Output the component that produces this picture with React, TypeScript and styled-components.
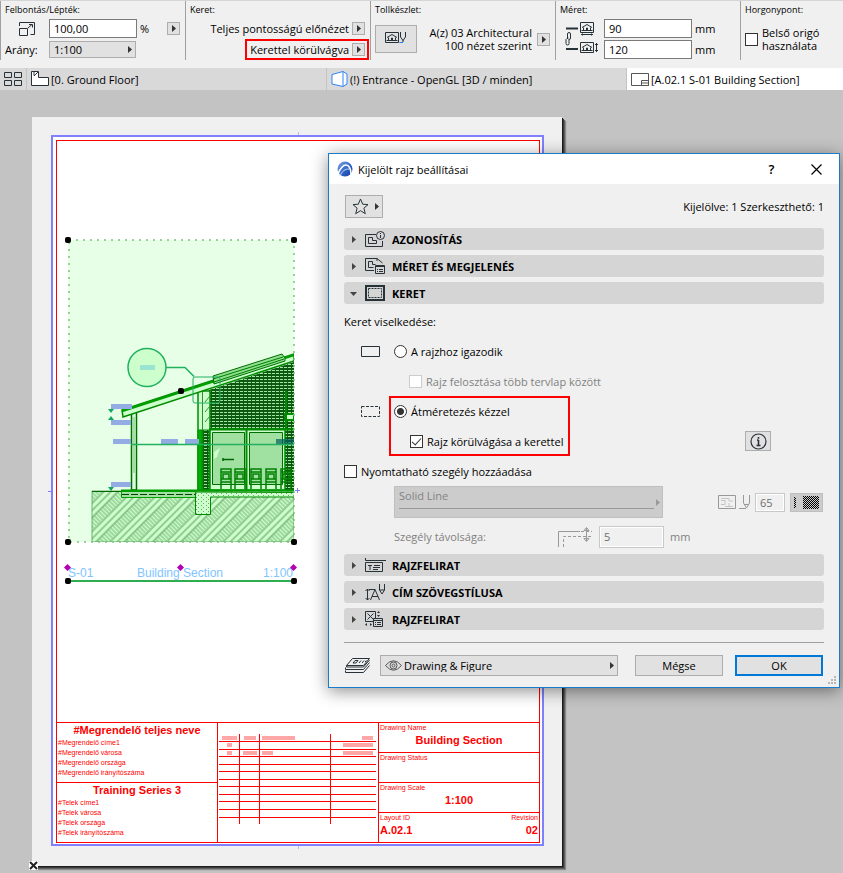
import React from "react";
import styled, { createGlobalStyle, css } from "styled-components";

const ink = "#263238";
const face = "#e1e1e1";
const edge = "#adadad";
const red = "#ff0000";

const GlobalStyle = createGlobalStyle`
  * { box-sizing: border-box; }
  body { margin: 0; }
  body, button, input, select {
    font-family: "Open Sans", "Noto Sans", sans-serif;
    font-size: 11px;
    line-height: 13px;
    color: #000;
  }
  button, input, select { margin: 0; padding: 0; border-radius: 0; }
  svg { display: block; flex: none; }
`;

/* ---------- shared parts ---------- */

const Page = styled.div`
  position: relative;
  display: flex;
  flex-direction: column;
  min-height: 100vh;
  background: #c3c3c3;
  white-space: nowrap;
`;

const Push = styled.span`
  margin-left: auto;
`;

const ArrowButton = styled.button`
  display: flex;
  align-items: center;
  justify-content: center;
  flex: none;
  width: 13px;
  height: 13px;
  border: 1px solid ${edge};
  background: ${face};
`;

const TextField = styled.input<{ $w: number; $h?: number }>`
  width: ${(p) => p.$w}px;
  height: ${(p) => p.$h ?? 19}px;
  padding: 0 4px;
  border: 1px solid #7a7a7a;
  background: #fff;
  &:disabled {
    border: 1px solid #c8c8c8;
    outline: 1px solid #fff;
    outline-offset: -2px;
    background: #f0f0f0;
    color: #6d6d6d;
  }
`;

const SelectBox = styled.span<{ $w?: number; $h: number; $disabled?: boolean }>`
  position: relative;
  display: flex;
  ${(p) => (p.$w ? `width: ${p.$w}px;` : "flex: 1;")}
  height: ${(p) => p.$h}px;
  border: 1px solid ${(p) => (p.$disabled ? "#bfbfbf" : edge)};
  background: ${(p) => (p.$disabled ? "#cccccc" : face)};
`;

const Select = styled.select<{ $left?: number; $bottom?: number }>`
  appearance: none;
  flex: 1;
  border: 0;
  background: transparent;
  padding: 0 14px ${(p) => p.$bottom ?? 0}px ${(p) => p.$left ?? 4}px;
  &:disabled { color: #838383; opacity: 1; }
`;

const Overlay = styled.span<{ $side: "left" | "right"; $inset: number }>`
  position: absolute;
  top: 0;
  bottom: 0;
  ${(p) => p.$side}: ${(p) => p.$inset}px;
  display: flex;
  align-items: center;
  pointer-events: none;
`;

const highlight = css`
  outline: 2px solid ${red};
  outline-offset: -2px;
`;

const CheckLabel = styled.label<{ $muted?: boolean; $left?: number }>`
  display: flex;
  align-items: center;
  gap: 4px;
  height: 30px;
  padding-left: ${(p) => p.$left ?? 0}px;
  color: ${(p) => (p.$muted ? "#808080" : "#000")};
`;

const CheckBox = styled.input.attrs({ type: "checkbox" })`
  appearance: none;
  display: flex;
  justify-content: center;
  flex: none;
  width: 13px;
  height: 13px;
  border: 1px solid #333;
  background: #fff;
  &:disabled { border-color: #ccc; }
  &:checked::before {
    content: "";
    width: 4px;
    height: 8px;
    border: solid #333;
    border-width: 0 1px 1px 0;
    transform: rotate(42deg);
  }
`;

const Radio = styled.input.attrs({ type: "radio" })`
  appearance: none;
  flex: none;
  width: 13px;
  height: 13px;
  border: 1px solid #333;
  border-radius: 50%;
  background: #fff;
  &:checked { background: radial-gradient(circle, #333 0 3px, #fff 4px); }
`;

const Triangle = ({ down = false, color = "#333" }: { down?: boolean; color?: string }) => (
  <svg width="7" height="7" viewBox="0 0 7 7" fill={color}>
    <path d={down ? "M0 2h7L3.5 6z" : "M2 0v7l4-3.5z"} />
  </svg>
);

/* ---------- icons ---------- */

const Line = styled.svg.attrs({ fill: "none", stroke: ink })``;

const ScaleIcon = () => (
  <Line width="17" height="14" viewBox="0 0 17 14">
    <path d="M.5 4V.5h15v12h-4M.5 6.500h8v7h-8zM9 6l4-3.500M10 2.500h3.500V5.500" />
  </Line>
);

const House = ({ pen = false, arrow }: { pen?: boolean; arrow?: "h" | "v" }) => (
  <Line width={pen ? 22 : 19} height="14" viewBox={`0 0 ${pen ? 22 : 19} 14`}>
    <path d="M.5 .5h13v10H.5zM1.500 8.500h11M3.500 8V5.500M10.500 8V5.500M2 5.500L7 2.500l5 3M6.500 8V6h1v2" />
    {arrow === "h" && <path d="M1 12.500h12M2.500 11.500v2M11.500 11.500v2" />}
    {arrow === "v" && <path d="M16.500 1v9M15 2.500h3M15 8.500h3" />}
    {pen && <path d="M15.500 0v5l2.500 3.500L20.500 5V0M18 8v2" />}
    {pen && <path d="M14.500 10.500H18" stroke="#1e7bff" />}
  </Line>
);

const ChainIcon = () => (
  <Line width="14" height="28" viewBox="0 0 14 28">
    <path d="M2 3.500h12M2 24h12" strokeWidth="2" />
    <path d="M3.500 14V9q0-1.500 1.500-1.500T6.500 9v4q0 1.500-1.500 1.500M4.500 13q-1.500 0-2.500 1.500v4q0 1.500 1.500 1.500T5 18.500V14" />
  </Line>
);

const GridIcon = () => (
  <Line width="19" height="15" viewBox="0 0 19 15">
    <path d="M.5 .5h7v5h-7zM10.500 .5h7v5h-7zM.5 8.500h7v5h-7zM10.500 8.500h7v5h-7z" />
  </Line>
);

const PlanIcon = () => (
  <svg width="18" height="16" viewBox="0 0 18 16" fill="#fff" stroke={ink}>
    <path d="M.5 .5h7v6h10v8H.5z" />
    <path d="M3 1v3.500M3 5l4-4" fill="none" />
  </svg>
);

const CubeIcon = () => (
  <svg width="17" height="17" viewBox="0 0 17 17" fill="#fff" stroke="#2f83f5">
    <path d="M1 3.500L12 .5v15L1 13zM12 .5l4 2.500v10l-4 2.500" />
  </svg>
);

const LayoutIcon = () => (
  <svg width="18" height="13" viewBox="0 0 18 13" fill="#fff" stroke="#555">
    <path d="M.5 .5h17v12H.5zM10.500 7.500h7v5h-7zM10.500 10h7" />
  </svg>
);

const Logo = () => (
  <svg width="16" height="16" viewBox="0 0 16 16">
    <defs>
      <linearGradient id="logo" x1="0" y1="0" x2="1" y2="1">
        <stop offset="0" stopColor="#7fa6e8" />
        <stop offset=".6" stopColor="#2b5ec4" />
        <stop offset="1" stopColor="#163c93" />
      </linearGradient>
    </defs>
    <circle cx="8" cy="8" r="7.500" fill="url(#logo)" />
    <path d="M1 13C3 8 6 4 9 4s5 4 5 9" fill="none" stroke="#fff" strokeWidth="1.600" />
    <path d="M3 15c2-5 5-7 9-7" fill="none" stroke="#c5d8f7" />
  </svg>
);

const StarIcon = () => (
  <Line width="17" height="17" viewBox="0 0 17 17">
    <path d="M8.500 1l2.200 5.200 5.300.4-4.100 3.600 1.400 5.500-4.800-3-4.800 3 1.400-5.500L1 6.600l5.300-.4z" />
  </Line>
);

const IdentityIcon = () => (
  <Line width="20" height="16" viewBox="0 0 20 16">
    <path d="M11 3.500H.5v12h17V10M3.500 6.500v6h8v-3h-4v-3z" />
    <circle cx="15.500" cy="4.500" r="4" />
    <path d="M15.500 4v3M15.500 2v1" />
  </Line>
);

const SizeIcon = () => (
  <Line width="20" height="16" viewBox="0 0 20 16">
    <path d="M9 12.500H.5V.5H12L17.500 5M12 .5V3M3.500 3.500v6h5M3.500 3.500h4v3h3" />
    <path d="M10.500 7.500h9v8h-9z" />
    <path d="M11 8.500h8M12 11.500h1M14 11.500h4M12 13.500h1M14 13.500h4" />
  </Line>
);

const FrameIcon = () => (
  <Line width="20" height="16" viewBox="0 0 20 16">
    <path d="M1 1h18v14H1z" strokeWidth="2" />
    <path d="M3.500 3.500h13v9h-13z" strokeDasharray="2 1" />
  </Line>
);

const TitleIcon = () => (
  <Line width="21" height="14" viewBox="0 0 21 14">
    <path d="M.5 0v2.500H21M.5 4.500h17v9H.5zM3 7.500h4M5 7.500V12M9 7.500h6M8 9.500h7M8 11.500h5" />
  </Line>
);

const TextStyleIcon = () => (
  <Line width="21" height="17" viewBox="0 0 21 17">
    <path d="M2.500 5v11M.5 7l2-2 2 2M.5 14l2 2 2-2M5.500 16L10 5.500 14.500 16M7 12.500h6M4 5.500h6" />
    <path d="M14.500 0v6l2.500 4 2.500-4V0M14.500 6h5" />
  </Line>
);

const TitleGridIcon = () => (
  <Line width="19" height="17" viewBox="0 0 19 17">
    <path d="M8 10.500H.5V.5h10V7M2.500 2.500l6 6M8.500 2.500l-6 6M8.500 7.500h9v8h-9zM9 9.500h8M10 11.500h1M12 11.500h4M10 13.500h1M12 13.500h4" />
    <path d="M13.500 0L12 2h3zM13.500 6L12 4h3zM0 13.500l2-1.500v3zM7 13.500l-2-1.500v3z" fill={ink} stroke="none" />
  </Line>
);

const BoxIcon = ({ dashed = false }: { dashed?: boolean }) => (
  <Line width="19" height="11" viewBox="0 0 19 11">
    <path d="M.5 .5h18v10H.5z" strokeDasharray={dashed ? "3 1.500" : undefined} />
  </Line>
);

const InfoIcon = () => (
  <Line width="17" height="17" viewBox="0 0 17 17">
    <circle cx="8.500" cy="8.500" r="7.500" strokeWidth="1.200" />
    <path d="M8.500 7v5.500M8.500 4v1.800M7 7h1.500M6.500 12.500h4" strokeWidth="1.600" />
  </Line>
);

const PenIcon = () => (
  <svg width="32" height="15" viewBox="0 0 32 15" fill="none" stroke="#999">
    <path d="M.5 .5h17v13H.5z" />
    <path d="M3 5.500h4v4H3M3 3.500h8V6h4M11 8v3.500h4M7 11.500h4" stroke="#c4c4c4" />
    <path d="M25.500 0v8l3 5 3-5V0M26 9.500h5M21 13.500h7" />
  </svg>
);

const OffsetIcon = () => (
  <svg width="35" height="20" viewBox="0 0 35 20" fill="none" stroke="#999">
    <path d="M.5 20V4.500H22" />
    <path d="M5.500 20V9.500H34" strokeDasharray="3 2" />
    <path d="M23 4.500H34" strokeDasharray="3 2" />
    <path d="M28.500 1v13M26 3.500l2.500-3 2.500 3zM26 11.500l2.500 3 2.500-3z" />
  </svg>
);

const PatternIcon = () => (
  <svg width="27" height="13" viewBox="0 0 27 13">
    <defs>
      <pattern id="check" width="2" height="2" patternUnits="userSpaceOnUse">
        <path d="M0 0h1v1H0zM1 1h1v1H1z" />
      </pattern>
    </defs>
    <path d="M1 1h2v11H1zM10 0h16v13H10z" fill="url(#check)" />
  </svg>
);

const LayersIcon = () => (
  <Line width="26" height="16" viewBox="0 0 26 16">
    <path d="M7.500 .5h17l-6 7H1.500zM1.500 7.500V9h17l6-7M.5 9.500v2h18l6-7M.5 12.500v2h18l6-7M8 5l2-2.500h3L11 5zM14 5l2-2.500M17 5l2-2.500M20 4l1.500-1.500" />
  </Line>
);

const EyeIcon = () => (
  <svg width="17" height="11" viewBox="0 0 17 11" fill="none" stroke="#555">
    <path d="M.5 5.500Q8.500-4 16.500 5.500 8.500 15 .5 5.500z" />
    <circle cx="8.500" cy="5.500" r="3.500" />
    <circle cx="8.500" cy="5.500" r="1.500" />
  </svg>
);

/* ---------- toolbar ---------- */

const Toolbar = styled.header`
  display: grid;
  grid-template-columns: repeat(4, 185fr) 103fr;
  padding-bottom: 8px;
  border-top: 1px solid #d5d5d5;
  background: #f0f0f0;
`;

const Group = styled.section`
  display: flex;
  flex-direction: column;
  height: 59px;
  padding: 2px 5px 0 4px;
  border-left: 1px solid #a0a0a0;
`;

const GroupTitle = styled.span`
  height: 15px;
  font-size: 9px;
  line-height: 13px;
`;

const ToolRow = styled.div<{ $end?: boolean }>`
  display: flex;
  align-items: center;
  justify-content: ${(p) => (p.$end ? "flex-end" : "flex-start")};
  gap: 3px;
  height: 21px;
`;

const Lead = styled.label`
  display: flex;
  justify-content: flex-start;
  width: 41px;
`;

const LeadIcon = styled(Lead)`
  padding-left: 14px;
`;

const Highlighted = styled.span`
  display: flex;
  align-items: center;
  gap: 3px;
  height: 21px;
  margin-right: -4px;
  padding: 0 4px 0 5px;
  ${highlight}
`;

const ToolBody = styled.div`
  display: flex;
  align-items: center;
  gap: 5px;
  height: 42px;
`;

const IconButton = styled.button<{ $w: number; $h: number }>`
  display: flex;
  align-items: center;
  justify-content: center;
  width: ${(p) => p.$w}px;
  height: ${(p) => p.$h}px;
  border: 1px solid ${edge};
  background: ${face};
`;

const FavoriteButton = styled(IconButton)`
  justify-content: flex-start;
  gap: 4px;
  padding-left: 6px;
`;

const TwoLines = styled.span<{ $end?: boolean }>`
  display: flex;
  flex-direction: column;
  ${(p) => p.$end && "margin-left: auto; text-align: right;"}
`;

const SizeIcons = styled.div`
  display: flex;
  align-items: center;
  gap: 2px;
  padding-left: 4px;
`;

const Stack = styled.div<{ $gap?: number }>`
  display: flex;
  flex-direction: column;
  gap: ${(p) => p.$gap ?? 0}px;
`;

const AnchorLabel = styled.label`
  display: flex;
  align-items: center;
  gap: 4px;
  height: 42px;
`;

const TopTools = () => (
  <Toolbar>
    <Group>
      <GroupTitle>Felbontás/Lépték:</GroupTitle>
      <ToolRow>
        <LeadIcon htmlFor="resolution"><ScaleIcon /></LeadIcon>
        <TextField id="resolution" aria-label="Felbontás" $w={88} defaultValue="100,00" />
        <span>%</span>
        <Push><ArrowButton aria-label="Felbontás lista"><Triangle /></ArrowButton></Push>
      </ToolRow>
      <ToolRow>
        <Lead htmlFor="ratio">Arány:</Lead>
        <SelectBox $w={87} $h={17}>
          <Select id="ratio"><option>1:100</option></Select>
          <Overlay $side="right" $inset={2}><Triangle /></Overlay>
        </SelectBox>
      </ToolRow>
    </Group>
    <Group>
      <GroupTitle>Keret:</GroupTitle>
      <ToolRow $end>
        <span>Teljes pontosságú előnézet</span>
        <ArrowButton aria-label="Előnézet"><Triangle /></ArrowButton>
      </ToolRow>
      <ToolRow $end>
        <Highlighted>
          <span>Kerettel körülvágva</span>
          <ArrowButton aria-label="Körülvágás"><Triangle /></ArrowButton>
        </Highlighted>
      </ToolRow>
    </Group>
    <Group>
      <GroupTitle>Tollkészlet:</GroupTitle>
      <ToolBody>
        <IconButton $w={42} $h={28} aria-label="Tollkészlet"><House pen /></IconButton>
        <TwoLines $end><span>A(z) 03 Architectural</span><span>100 nézet szerint</span></TwoLines>
        <ArrowButton aria-label="Tollkészlet lista"><Triangle /></ArrowButton>
      </ToolBody>
    </Group>
    <Group>
      <GroupTitle>Méret:</GroupTitle>
      <ToolBody>
        <SizeIcons>
          <ChainIcon />
          <Stack $gap={6}><House arrow="h" /><House arrow="v" /></Stack>
        </SizeIcons>
        <Stack>
          <ToolRow><TextField aria-label="Szélesség" $w={88} defaultValue="90" /><span>mm</span></ToolRow>
          <ToolRow><TextField aria-label="Magasság" $w={88} defaultValue="120" /><span>mm</span></ToolRow>
        </Stack>
      </ToolBody>
    </Group>
    <Group>
      <GroupTitle>Horgonypont:</GroupTitle>
      <AnchorLabel>
        <CheckBox />
        <TwoLines><span>Belső origó</span><span>használata</span></TwoLines>
      </AnchorLabel>
    </Group>
  </Toolbar>
);

/* ---------- tabs ---------- */

const TabBar = styled.nav`
  display: grid;
  grid-template-columns: 27px 300fr 300fr 216fr;
  height: 22px;
  background: #d9d9d9;
`;

const Tab = styled.button<{ $active?: boolean }>`
  display: flex;
  align-items: center;
  gap: 2px;
  padding: 0 4px;
  border: 0;
  border-right: ${(p) => (p.$active ? "0" : "1px solid #c3c3c3")};
  background: ${(p) => (p.$active ? "#fff" : "transparent")};
`;

const Tabs = () => (
  <TabBar>
    <Tab aria-label="Lapok áttekintése"><GridIcon /></Tab>
    <Tab><PlanIcon />[0. Ground Floor]</Tab>
    <Tab><CubeIcon />(!) Entrance - OpenGL [3D / minden]</Tab>
    <Tab $active><LayoutIcon />[A.02.1 S-01 Building Section]</Tab>
  </TabBar>
);

/* ---------- layout sheet ---------- */

const Canvas = styled.main`
  display: flex;
  flex: 1;
  padding: 27px 32px 7px;
`;

const Sheet = styled.div`
  position: relative;
  display: flex;
  width: min(100%, 530px);
  padding: 18px 18px 20px 19px;
  background: #f0f0f0;
  box-shadow: 1px 1px 0 #1c1c1c, 2px 2px 0 #3a3a3a, 3px 3px 0 #606060, 4px 4px 1px #8a8a8a;
`;

const Margin = styled.div`
  position: relative;
  display: flex;
  flex: 1;
  padding: 3px 2px 1px 3px;
  border: 2px solid #8080ff;
  background: #fff;
  &::before, &::after {
    content: "";
    position: absolute;
    background: #8080ff;
  }
  &::before { top: -5px; bottom: -5px; left: 50%; width: 1px; clip-path: polygon(0 0, 100% 0, 100% 5px, 0 5px, 0 calc(100% - 5px), 100% calc(100% - 5px), 100% 100%, 0 100%); }
  &::after { left: -5px; top: 50%; width: 4px; height: 1px; }
`;

const Frame = styled.div`
  display: flex;
  flex-direction: column;
  flex: 1;
  border: 1px solid ${red};
`;

const DrawingArea = styled.div`
  flex: 1;
  padding: 91px 0 0 3px;
`;

const TitleBlock = styled.div`
  display: grid;
  grid-template-columns: 160fr 161fr 161fr;
  height: 120px;
  border-top: 1px solid ${red};
  color: ${red};
  font: 7px/10px "Liberation Sans", Arial, sans-serif;
`;

const BlockColumn = styled.div`
  display: flex;
  flex-direction: column;
  & + & { border-left: 1px solid ${red}; }
`;

const BlockCell = styled.div`
  flex: 1;
  padding: 0 1px;
  & + & { border-top: 1px solid ${red}; }
`;

const BlockTitle = styled.div`
  font-size: 11px;
  line-height: 15px;
  font-weight: bold;
  text-align: center;
`;

const Split = styled.div`
  display: flex;
  justify-content: space-between;
`;

const Origin = styled.svg`
  position: absolute;
  left: -3px;
  bottom: -4px;
`;

const rowLines = [9, 17, 24, 32, 39, 47, 54, 62, 69, 77, 85];
const redacted = [
  [4, 4, 15], [26, 4, 12], [44, 4, 33], [144, 4, 11],
  [9, 11, 5], [125, 11, 30], [9, 19, 5], [25, 19, 14], [44, 19, 11], [125, 19, 30],
];

const RevisionTable = () => (
  <svg width="158" height="92" viewBox="0 0 158 92">
    {rowLines.map((y) => <path key={y} d={`M1 ${y - 0.5}h157`} stroke={red} />)}
    <path d="M21.500 1v90M41.500 1v90M112.500 1v90" stroke={red} />
    {redacted.map(([x, y, w]) => <rect key={`${x}-${y}`} x={x} y={y - 1} width={w} height="4" fill="#ffa6a6" />)}
  </svg>
);

const RevisionCell = styled.div`
  padding-top: 10px;
`;

const Handle = ({ x, y }: { x: number; y: number }) => (
  <rect x={x - 3} y={y - 3} width="6" height="6" rx="2" />
);

const Drawing = () => (
  <svg width="242" height="360" viewBox="60 232 242 360">
    <defs>
      <pattern id="soil" width="24" height="20" patternUnits="userSpaceOnUse" patternTransform="rotate(-45)">
        <path d="M0 1h24M0 6h24M0 11h24" stroke="#4f8f4f" strokeWidth=".9" />
        <path d="M2 11v10M5 11v10M8 11v10M11 11v10M14 11v10M17 11v10M20 11v10M23 11v10" stroke="#5f9f5f" strokeWidth=".8" />
      </pattern>
      <pattern id="brick" width="4" height="3" patternUnits="userSpaceOnUse">
        <path d="M0 0h4v3H0z" fill="#0c5a10" />
        <path d="M0 1h3v1H0z" fill="#a4e4a4" />
      </pattern>
      <pattern id="dots" width="5" height="4" patternUnits="userSpaceOnUse">
        <path d="M1 1h1v1H1zM3 3h1v1H3z" fill="#6aaa6a" />
      </pattern>
      <clipPath id="view"><path d="M68 240h226v302H68z" /></clipPath>
    </defs>
    <path d="M68 240h226v302H68z" fill="#e6ffe6" />
    <g clipPath="url(#view)" fill="none" stroke="#008a00">
      <path d="M92 491h202v51H92z" fill="#ccffcc" stroke="none" />
      <path d="M92 491h202v51H92z" fill="url(#soil)" stroke="#4f9f4f" strokeWidth=".8" />
      <path d="M92 491.500h30" stroke="#006400" />
      <path d="M209 390l85-28v128h-85z" fill="url(#brick)" stroke="none" />
      <path d="M198 391h12v99h-12z" fill="#ccffcc" stroke="#008a00" strokeWidth="1.500" />
      <path d="M202.500 391v99M205 402l5-6M205 412l5-6M205 422l5-6" stroke="#2f8f2f" />
      <path d="M198 430h4v60h-4z" fill="#00b000" />
      <path d="M203 430h6v60h-6z" fill="url(#brick)" />
      <path d="M210 429h75v61h-75z" fill="#ccffcc" strokeWidth="1.500" />
      <path d="M212.500 432.500h32v52h-32zM249.500 432.500h33v52h-33z" fill="#a0e0a0" stroke="#006e00" />
      <path d="M246.500 429v61M209 429.500h85" strokeWidth="2" />
      <path d="M214 452l6-4-3 9-3 2z" fill="#ccffcc" stroke="none" />
      <path d="M223 459.500h11M223 458v3" stroke="#006400" strokeWidth="1.500" />
      {[221, 235, 251, 266, 281].map((x) => (
        <path key={x} d={`M${x} 489V469h10v20M${x} 472h10M${x} 479h10M${x} 482h10M${x + 2} 474h6v5h-6z`} stroke="#008000" strokeWidth="1.500" />
      ))}
      <path d="M131.500 410h5v80h-5z" fill="#d9fbd9" stroke="#006e00" strokeWidth="1.500" />
      <path d="M133 417h3v56h-3z" fill="#a0e0a0" stroke="none" />
      <path d="M122 410L294 354v7L123 417z" fill="#ccffcc" stroke="#008a00" strokeWidth="1.500" />
      <path d="M122 411L294 355" stroke="#009c00" strokeWidth="2.500" />
      <path d="M213 376l69-22 3 4v3l-71 23z" fill="#8fdf8f" stroke="#006e00" />
      <path d="M213 379l70-22M214 382l70-23" stroke="#007c00" />
      <path d="M286 391v38M285 414h9v6h-9z" fill="#ccffcc" strokeWidth="2" />
      <path d="M121 490.500h174" stroke="#009c00" strokeWidth="2" />
      <path d="M121.500 491.500h74v6h-74z" fill="#a0e0a0" stroke="#00a000" />
      <path d="M122 494.500h73" stroke="#003c00" strokeDasharray="7 2" />
      <path d="M195.500 492v22.500h15V497H295v-4.500z" fill="#ccffcc" stroke="#008a00" />
      <path d="M196 492v22h14v-17h84v-5z" fill="url(#dots)" stroke="none" />
      <g fill="#94ace4" stroke="none">
        <path d="M111 404h21v5h-21zM111 420h20v5h-20zM113 439h18v5h-18zM161 439h17v5h-17zM185 439h14v5h-14zM111 482h20v5h-20z" />
        <path d="M276 439h18v5h-18z" fill="#006060" opacity=".7" />
      </g>
      <path d="M131 444.500h163" stroke="#20b060" strokeWidth="1.500" />
      <path d="M108 409h6l-3 4zM108 420l3-4 3 4zM108 487h6l-3 4z" fill="#10a860" stroke="none" />
      <g stroke="#20b060">
        <circle cx="147" cy="367.500" r="19" fill="#ccffcc" strokeWidth="1.500" />
        <path d="M166 367.500h19l9 9" strokeWidth="1.500" />
        <rect x="193" y="377" width="27" height="26" rx="2" />
      </g>
      <path d="M140 365h15v5h-15z" fill="#99e5d2" stroke="none" />
    </g>
    <path d="M69 240h225v302H69z" fill="none" stroke="#7cc47c" strokeWidth="1.500" strokeDasharray="2 5" />
    <path d="M68 581h226" stroke="#2fae4f" strokeWidth="2" />
    <g fill="#80c4ff" fontFamily="Liberation Sans, Arial, sans-serif" fontSize="12">
      <text x="68" y="577">S-01</text>
      <text x="180" y="577" textAnchor="middle">Building Section</text>
      <text x="293" y="577" textAnchor="end">1:100</text>
    </g>
    <path d="M67.500 564l3.500 3.500-3.500 3.500-3.500-3.500zM180.500 564l3.500 3.500-3.500 3.500-3.500-3.500zM293.500 564l3.500 3.500-3.500 3.500-3.500-3.500z" fill="#b400b4" />
    <path d="M297.500 488v5M295 490.500h5" stroke="#8080ff" />
    <Handle x={68} y={240} />
    <Handle x={294} y={240} />
    <Handle x={181} y={391} />
    <Handle x={68} y={542} />
    <Handle x={294} y={542} />
    <Handle x={68} y={581} />
    <Handle x={294} y={581} />
  </svg>
);

const LayoutSheet = () => (
  <Canvas>
    <Sheet>
      <Margin>
        <Frame>
          <DrawingArea><Drawing /></DrawingArea>
          <TitleBlock>
            <BlockColumn>
              <BlockCell>
                <BlockTitle>#Megrendelő teljes neve</BlockTitle>
                #Megrendelő címe1<br />#Megrendelő városa<br />#Megrendelő országa<br />#Megrendelő irányítószáma
              </BlockCell>
              <BlockCell>
                <BlockTitle>Training Series 3</BlockTitle>
                #Telek címe1<br />#Telek városa<br />#Telek országa<br />#Telek irányítószáma
              </BlockCell>
            </BlockColumn>
            <BlockColumn><RevisionCell><RevisionTable /></RevisionCell></BlockColumn>
            <BlockColumn>
              <BlockCell>Drawing Name<BlockTitle>Building Section</BlockTitle></BlockCell>
              <BlockCell>Drawing Status</BlockCell>
              <BlockCell>Drawing Scale<BlockTitle>1:100</BlockTitle></BlockCell>
              <BlockCell>
                <Split><span>Layout ID</span><span>Revision</span></Split>
                <Split><BlockTitle>A.02.1</BlockTitle><BlockTitle>02</BlockTitle></Split>
              </BlockCell>
            </BlockColumn>
          </TitleBlock>
        </Frame>
      </Margin>
      <Origin width="9" height="9" viewBox="0 0 9 9">
        <path d="M0 0h9v9H0z" fill="#fff" />
        <path d="M1 1l7 7M8 1L1 8" stroke="#222" strokeWidth="2" />
      </Origin>
    </Sheet>
  </Canvas>
);

/* ---------- settings dialog ---------- */

const Dialog = styled.section`
  position: absolute;
  top: 153px;
  right: 3px;
  width: min(512px, 100% - 6px);
  border: 1px solid #1a7cc8;
  background: #f0f0f0;
  box-shadow: 0 3px 16px rgba(0, 0, 0, 0.45);
`;

const TitleBar = styled.header`
  display: flex;
  align-items: center;
  gap: 5px;
  height: 30px;
  padding: 0 10px 0 8px;
  background: #fff;
`;

const WindowButton = styled.button`
  display: flex;
  align-items: center;
  justify-content: center;
  width: 25px;
  height: 24px;
  border: 0;
  background: none;
  font-size: 13px;
  font-weight: 600;
`;

const WindowButtons = styled.div`
  display: flex;
  gap: 20px;
  margin-left: auto;
`;

const DialogBody = styled.div`
  display: flex;
  flex-direction: column;
  gap: 5px;
  padding: 11px 15px 11px;
`;

const SelectionRow = styled.div`
  display: flex;
  align-items: center;
  justify-content: space-between;
  padding-left: 1px;
  margin-bottom: 5px;
`;

const SectionHeader = styled.button`
  display: flex;
  align-items: center;
  gap: 6px;
  height: 22px;
  padding: 0 6px;
  border: 0;
  border-radius: 3px;
  background: #d5d5d5;
  font-weight: 700;
`;

const SectionIcon = styled.span`
  display: flex;
  width: 21px;
  margin-left: 2px;
`;

const Section = ({ title, icon, open }: { title: string; icon: React.ReactNode; open?: boolean }) => (
  <SectionHeader aria-expanded={!!open}>
    <Triangle down={open} color="#444" />
    <SectionIcon>{icon}</SectionIcon>
    {title}
  </SectionHeader>
);

const Panel = styled.div`
  display: flex;
  flex-direction: column;
  margin: -2px 0 -6px;
`;

const PanelTitle = styled.div`
  height: 29px;
  line-height: 29px;
`;

const OptionRow = styled.div`
  display: flex;
`;

const OptionIcon = styled.div`
  display: flex;
  align-items: center;
  width: 45px;
  height: 30px;
  padding-left: 17px;
`;

const OptionGroup = styled.div<{ $marked?: boolean }>`
  padding: 0 7px 0 5px;
  ${(p) => p.$marked && highlight}
`;

const InfoSlot = styled.div`
  display: flex;
  align-items: flex-end;
  margin-left: auto;
  padding: 0 53px 5px 0;
`;

const BorderRow = styled.div<{ $h: number }>`
  display: flex;
  align-items: center;
  justify-content: space-between;
  height: ${(p) => p.$h}px;
  padding: 0 1px 0 50px;
  color: #808080;
`;

const Cluster = styled.div<{ $gap: number }>`
  display: flex;
  align-items: center;
  gap: ${(p) => p.$gap}px;
`;

const DistanceLabel = styled.label`
  width: 158px;
`;

const LineSample = styled.span`
  position: absolute;
  left: 4px;
  right: 8px;
  bottom: 8px;
  border-top: 1px solid #999;
`;

const PatternButton = styled(IconButton)`
  background: #ccc;
  border-color: #bfbfbf;
`;

const Footer = styled.footer`
  display: flex;
  align-items: center;
  gap: 9px;
  margin-top: 7px;
  padding: 12px 1px 0;
  border-top: 1px solid #a0a0a0;
`;

const PushButton = styled.button<{ $primary?: boolean }>`
  width: 88px;
  height: 21px;
  margin-left: ${(p) => (p.$primary ? 3 : 8)}px;
  border: ${(p) => (p.$primary ? "2px solid #0078d7" : `1px solid ${edge}`)};
  background: ${face};
`;

const Grip = styled.svg`
  position: absolute;
  right: 2px;
  bottom: 2px;
`;

const SettingsDialog = () => (
  <Dialog role="dialog" aria-label="Kijelölt rajz beállításai">
    <TitleBar>
      <Logo />
      <span>Kijelölt rajz beállításai</span>
      <WindowButtons>
        <WindowButton>?</WindowButton>
        <WindowButton aria-label="Bezárás">
          <svg width="11" height="11" viewBox="0 0 11 11"><path d="M.5 .5l10 10M10.500 .5l-10 10" stroke="#000" strokeWidth="1.200" /></svg>
        </WindowButton>
      </WindowButtons>
    </TitleBar>
    <DialogBody>
      <SelectionRow>
        <FavoriteButton $w={38} $h={23} aria-label="Kedvencek"><StarIcon /><Triangle /></FavoriteButton>
        <span>Kijelölve: 1 Szerkeszthető: 1</span>
      </SelectionRow>
      <Section title="AZONOSÍTÁS" icon={<IdentityIcon />} />
      <Section title="MÉRET ÉS MEGJELENÉS" icon={<SizeIcon />} />
      <Section title="KERET" icon={<FrameIcon />} open />
      <Panel>
        <PanelTitle>Keret viselkedése:</PanelTitle>
        <OptionRow>
          <OptionIcon><BoxIcon /></OptionIcon>
          <OptionGroup>
            <CheckLabel><Radio name="frame" />A rajzhoz igazodik</CheckLabel>
            <CheckLabel $muted $left={15}><CheckBox disabled />Rajz felosztása több tervlap között</CheckLabel>
          </OptionGroup>
        </OptionRow>
        <OptionRow>
          <OptionIcon><BoxIcon dashed /></OptionIcon>
          <OptionGroup $marked>
            <CheckLabel><Radio name="frame" defaultChecked />Átméretezés kézzel</CheckLabel>
            <CheckLabel $left={16}><CheckBox defaultChecked />Rajz körülvágása a kerettel</CheckLabel>
          </OptionGroup>
          <InfoSlot><IconButton $w={26} $h={20} aria-label="Információ"><InfoIcon /></IconButton></InfoSlot>
        </OptionRow>
        <CheckLabel><CheckBox />Nyomtatható szegély hozzáadása</CheckLabel>
        <BorderRow $h={32}>
          <SelectBox $w={269} $h={32} $disabled>
            <Select aria-label="Vonaltípus" $bottom={14} disabled><option>Solid Line</option></Select>
            <LineSample />
            <Overlay $side="right" $inset={1}><Triangle color="#999" /></Overlay>
          </SelectBox>
          <Cluster $gap={5}>
            <PenIcon />
            <TextField aria-label="Toll" $w={30} disabled defaultValue="65" />
            <PatternButton $w={33} $h={19} disabled aria-label="Tollszín"><PatternIcon /></PatternButton>
          </Cluster>
        </BorderRow>
        <BorderRow $h={37}>
          <Cluster $gap={6}>
            <DistanceLabel htmlFor="distance">Szegély távolsága:</DistanceLabel>
            <OffsetIcon />
            <TextField id="distance" $w={65} $h={22} disabled defaultValue="5" />
            <span>mm</span>
          </Cluster>
        </BorderRow>
      </Panel>
      <Section title="RAJZFELIRAT" icon={<TitleIcon />} />
      <Section title="CÍM SZÖVEGSTÍLUSA" icon={<TextStyleIcon />} />
      <Section title="RAJZFELIRAT" icon={<TitleGridIcon />} />
      <Footer>
        <LayersIcon />
        <SelectBox $h={21}>
          <Overlay $side="left" $inset={4}><EyeIcon /></Overlay>
          <Select aria-label="Fólia" $left={23}><option>Drawing &amp; Figure</option></Select>
          <Overlay $side="right" $inset={2}><Triangle /></Overlay>
        </SelectBox>
        <PushButton>Mégse</PushButton>
        <PushButton $primary>OK</PushButton>
      </Footer>
    </DialogBody>
    <Grip width="9" height="9" viewBox="0 0 9 9" fill="#b8b8b8">
      <path d="M6 0h2v2H6zM3 3h2v2H3zM6 3h2v2H6zM0 6h2v2H0zM3 6h2v2H3zM6 6h2v2H6z" />
    </Grip>
  </Dialog>
);

export default function App() {
  return (
    <Page>
      <GlobalStyle />
      <TopTools />
      <Tabs />
      <LayoutSheet />
      <SettingsDialog />
    </Page>
  );
}
